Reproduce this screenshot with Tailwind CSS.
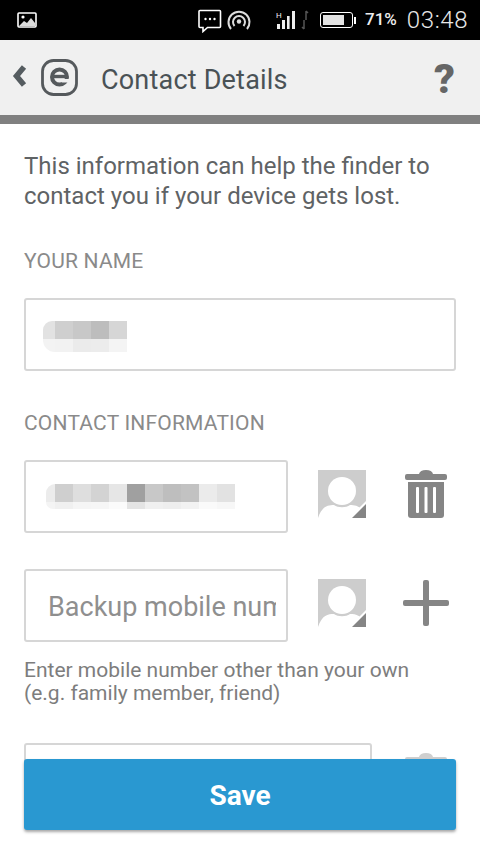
<!DOCTYPE html>
<html lang="en">
<head>
  <meta charset="UTF-8" />
  <meta name="viewport" content="width=device-width, initial-scale=1.0"/>
  <title>Contact Details</title>
  <script src="https://cdn.jsdelivr.net/npm/@tailwindcss/browser@4"></script>
</head>
<body class="bg-white font-['Roboto',sans-serif]">
<div class="relative w-[480px] h-[854px] overflow-hidden bg-white">
  <!-- status bar -->
  <div class="h-[40px] bg-black flex items-center text-white">
    <svg class="ml-[17px] w-[20px] h-[18px]" viewBox="0 0 20 18">
      <rect x="1" y="2" width="18" height="14" rx="1" fill="none" stroke="#fff" stroke-width="1.6"/>
      <circle cx="6" cy="6" r="1.6" fill="#fff"/>
      <path d="M2 15 L7 10 L10 12 L14 7 L18 12 V15 Z" fill="#ddd"/>
    </svg>
    <svg class="ml-[161px] w-[24px] h-[24px] mt-[2px]" viewBox="0 0 24 24">
      <path d="M2 1.5 H21.5 a1 1 0 0 1 1 1 V17.5 a1 1 0 0 1 -1 1 H9.5 L5 22.5 V18.5 H2 a1 1 0 0 1 -1 -1 V2.5 a1 1 0 0 1 1 -1 Z" fill="none" stroke="#fff" stroke-width="1.6"/>
      <circle cx="7.5" cy="10" r="1.2" fill="#fff"/><circle cx="12" cy="10" r="1.2" fill="#fff"/><circle cx="16.500" cy="10" r="1.2" fill="#fff"/>
    </svg>
    <svg class="ml-[5px] w-[24px] h-[22px]" viewBox="0 0 24 22" fill="none" stroke="#ddd" stroke-width="2">
      <path d="M4 20 A10.500 10.500 0 1 1 20 20"/>
      <path d="M7.500 17 A6 6 0 1 1 16.500 17"/>
      <circle cx="12" cy="12.500" r="2.200" fill="#ddd" stroke="none"/>
    </svg>
    <svg class="ml-[25px] w-[20px] h-[20px]" viewBox="0 0 20 20" fill="#eee">
      <text x="0" y="8" font-size="8" font-family="Roboto" fill="#eee">H</text>
      <rect x="1" y="14" width="3" height="5"/><rect x="6" y="10" width="3" height="9"/><rect x="11" y="6" width="2.600" height="13"/><rect x="16" y="1" width="3" height="18"/>
    </svg>
    <svg class="ml-[5px] w-[8px] h-[20px]" viewBox="0 0 8 20" fill="none" stroke="#555" stroke-width="1.500">
      <path d="M5 1 V10 M5 1 L7 3"/><path d="M3 10 V19 M3 19 L1 17"/>
    </svg>
    <div class="ml-[11px] w-[33px] h-[16px] rounded-[3px] border border-white p-[2px]">
      <div class="w-[21px] h-full bg-[#e2e2e2]"></div>
    </div>
    <div class="ml-[1px] w-[2px] h-[7px] bg-white"></div>
    <span class="ml-[9px] text-[17px] font-medium text-[#eee]">71%</span>
    <span class="ml-[10px] text-[24px] font-light tracking-[0.6px] text-[#e8e8e8]">03:48</span>
  </div>

  <!-- header -->
  <div class="h-[84px] bg-[#f0f0f0] border-b-[9px] border-[#808080] flex items-center">
    <svg class="ml-[12px] w-[15px] h-[22px] mb-[3px]" viewBox="0 0 15 22">
      <path d="M12 2 L4.500 11 L12 20" fill="none" stroke="#555c60" stroke-width="5.500"/>
    </svg>
    <svg class="ml-[14px] w-[37px] h-[37px] mb-[1px]" viewBox="0 0 37 37">
      <rect x="1.500" y="1.500" width="34" height="34" rx="11" fill="none" stroke="#55595c" stroke-width="2.800"/>
      <circle cx="18.500" cy="18" r="7.500" fill="none" stroke="#55595c" stroke-width="4"/>
      <path d="M11 17.500 H26" stroke="#55595c" stroke-width="3.400"/>
      <rect x="21" y="20" width="8" height="3.500" fill="#f0f0f0"/>
    </svg>
    <span class="ml-[23px] pt-[5px] text-[27px] tracking-[0.2px] text-[#4a5256]">Contact Details</span>
    <span class="ml-auto mr-[25px] pt-[4px] text-[41px] leading-none font-black text-[#666]">?</span>
  </div>

  <!-- form -->
  <div class="px-[24px] pt-[27px]">
    <p class="text-[24px] leading-[30px] text-[#5f6365]">This information can help the finder to contact you if your device gets lost.</p>

    <h2 class="mt-[38px] text-[21px] leading-[24px] tracking-[0.2px] text-[#8a8a8a]">YOUR NAME</h2>
    <div class="mt-[25px] h-[73px] border-2 border-[#d6d6d6] rounded-[3px] flex items-center pl-[17px]">
      <div class="flex flex-col mt-[4px]">
        <div class="flex h-[18px]">
          <div class="w-[12px] bg-[#e2e2e2] rounded-tl-[9px]"></div><div class="w-[18px] bg-[#cfcfcf]"></div><div class="w-[18px] bg-[#c8c8c8]"></div><div class="w-[18px] bg-[#bdbdbd]"></div><div class="w-[18px] bg-[#d6d6d6]"></div>
        </div>
        <div class="flex h-[13px]">
          <div class="w-[12px] bg-[#f3f3f3] rounded-bl-[12px]"></div><div class="w-[18px] bg-[#f2f2f2]"></div><div class="w-[18px] bg-[#ebebeb]"></div><div class="w-[18px] bg-[#ececec]"></div><div class="w-[18px] bg-[#f4f4f4]"></div>
        </div>
      </div>
    </div>

    <h2 class="mt-[40px] text-[21px] leading-[24px] tracking-[0.2px] text-[#8a8a8a]">CONTACT INFORMATION</h2>

    <div class="mt-[25px] flex items-start">
      <div class="w-[264px] h-[73px] border-2 border-[#d6d6d6] rounded-[3px] flex items-center pl-[20px]">
        <div class="flex flex-col">
          <div class="flex h-[18px]">
            <div class="w-[9px] bg-[#ececec] rounded-tl-[9px]"></div><div class="w-[18px] bg-[#cfcfcf]"></div><div class="w-[18px] bg-[#dedede]"></div><div class="w-[18px] bg-[#d3d3d3]"></div><div class="w-[18px] bg-[#e6e6e6]"></div><div class="w-[18px] bg-[#a0a0a0]"></div><div class="w-[18px] bg-[#c8c8c8]"></div><div class="w-[18px] bg-[#bebebe]"></div><div class="w-[18px] bg-[#c2c2c2]"></div><div class="w-[18px] bg-[#ebebeb]"></div><div class="w-[18px] bg-[#e2e2e2]"></div>
          </div>
          <div class="flex h-[7px]">
            <div class="w-[9px] bg-[#f4f4f4] rounded-bl-[8px]"></div><div class="w-[18px] bg-[#f0f0f0]"></div><div class="w-[18px] bg-[#f5f5f5]"></div><div class="w-[18px] bg-[#f6f6f6]"></div><div class="w-[18px] bg-[#fbfbfb]"></div><div class="w-[18px] bg-[#e4e4e4]"></div><div class="w-[18px] bg-[#f0f0f0]"></div><div class="w-[18px] bg-[#eeeeee]"></div><div class="w-[18px] bg-[#f2f2f2]"></div><div class="w-[18px] bg-[#fafafa]"></div><div class="w-[18px] bg-[#f7f7f7]"></div>
          </div>
        </div>
      </div>
      <svg class="ml-[30px] mt-[10px] w-[48px] h-[48px]" viewBox="0 0 48 48">
        <rect width="48" height="48" fill="#cdcdcd"/>
        <path d="M0 48 C4 36 10 35 16 35 C20 38 28 38 32 35 C38 35 44 36 48 48 Z" fill="#fff"/>
        <circle cx="24" cy="21" r="14" fill="#fff"/>
        <path d="M48 31 V48 H31 Z" fill="#fff"/>
        <path d="M48 34 V48 H34 Z" fill="#858585"/>
      </svg>
      <svg class="ml-[39px] mt-[10px] w-[42px] h-[48px]" viewBox="0 0 42 48">
        <path d="M14 4 Q15 0 21 0 Q27 0 28 4 H40 Q42 4 42 6 V8 Q42 10 40 10 H2 Q0 10 0 8 V6 Q0 4 2 4 Z" fill="#858585"/>
        <path d="M3 12 H39 V45 Q39 48 36 48 H6 Q3 48 3 45 Z" fill="#858585"/>
        <rect x="11" y="17" width="3" height="26" rx="1" fill="#fff"/><rect x="19.500" y="17" width="3" height="26" rx="1" fill="#fff"/><rect x="28" y="17" width="3" height="26" rx="1" fill="#fff"/>
      </svg>
    </div>

    <div class="mt-[36px] flex items-start">
      <input class="w-[264px] h-[73px] border-2 border-[#d6d6d6] rounded-[3px] pl-[22px] pr-[10px] pt-[2px] text-[27px] outline-none placeholder:text-[#8f8f8f]" placeholder="Backup mobile number" />
      <svg class="ml-[30px] mt-[10px] w-[48px] h-[48px]" viewBox="0 0 48 48">
        <rect width="48" height="48" fill="#cdcdcd"/>
        <path d="M0 48 C4 36 10 35 16 35 C20 38 28 38 32 35 C38 35 44 36 48 48 Z" fill="#fff"/>
        <circle cx="24" cy="21" r="14" fill="#fff"/>
        <path d="M48 31 V48 H31 Z" fill="#fff"/>
        <path d="M48 34 V48 H34 Z" fill="#858585"/>
      </svg>
      <svg class="ml-[37px] mt-[11px] w-[46px] h-[46px]" viewBox="0 0 46 46">
        <rect x="20" y="0" width="6" height="46" rx="2" fill="#858585"/>
        <rect x="0" y="20" width="46" height="6" rx="2" fill="#858585"/>
      </svg>
    </div>

    <p class="mt-[17px] text-[21px] leading-[23px] text-[#7d7d7d]">Enter mobile number other than your own<br>(e.g. family member, friend)</p>

    <div class="mt-[38px] flex items-start">
      <div class="w-[348px] h-[73px] border-2 border-[#d6d6d6] rounded-[3px]"></div>
      <svg class="ml-[33px] mt-[10px] w-[42px] h-[48px]" viewBox="0 0 42 48">
        <path d="M14 4 Q15 0 21 0 Q27 0 28 4 H40 Q42 4 42 6 V8 Q42 10 40 10 H2 Q0 10 0 8 V6 Q0 4 2 4 Z" fill="#cfcfcf"/>
      </svg>
    </div>
  </div>

  <!-- save button sits over the scrolling form -->
  <button class="absolute left-[24px] top-[759px] w-[432px] h-[71px] pt-[2px] bg-[#2998d1] rounded-[3px] shadow-[0_2px_3px_rgba(0,0,0,0.35)] text-white text-[28px] font-bold">Save</button>
</div>
</body>
</html>
